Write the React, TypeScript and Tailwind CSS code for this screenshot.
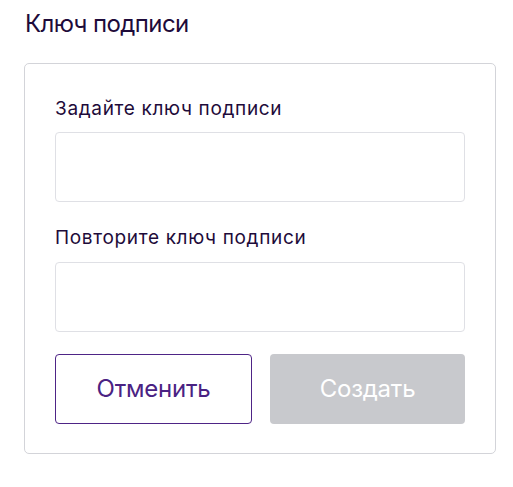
const FONT = "font-['Inter','Noto_Sans',sans-serif]";

function Field({ label, first }: { label: string; first?: boolean }) {
  return (
    <div className={first ? "" : "mt-[24px]"}>
      <label className="block text-[19px] leading-[24px] tracking-[0.035em] text-[#1e0b3a]">{label}</label>
      <input
        type="password"
        className={`${first ? "mt-[11px]" : "mt-[12px]"} block h-[70px] w-full rounded-[4px] border border-[#dfe0e5] bg-white px-4 outline-none`}
      />
    </div>
  );
}

export default function App() {
  return (
    <div className={`${FONT} h-[487px] w-[513px] bg-white`}>
      <h1 className="h-[63px] pl-[25px] pt-[10px] text-[24px] leading-[28px] font-normal tracking-[-0.025em] text-[#1e0b3a]">
        Ключ подписи
      </h1>
      <div className="ml-[24px] w-[472px] rounded-[5px] border border-[#d3d4d9] px-[30px] pt-[33px] pb-[29px]">
        <Field label="Задайте ключ подписи" first />
        <Field label="Повторите ключ подписи" />
        <div className="mt-[22px] flex gap-[18px]">
          <button className="flex h-[70px] flex-1 items-center justify-center rounded-[4px] border border-[#4e2486] bg-white text-[24px] tracking-[-0.01em] text-[#4a2283]">
            Отменить
          </button>
          <button
            disabled
            className="flex h-[70px] flex-1 items-center justify-center rounded-[4px] bg-[#c8c9cd] text-[24px] tracking-[-0.01em] text-white"
          >
            Создать
          </button>
        </div>
      </div>
    </div>
  );
}
